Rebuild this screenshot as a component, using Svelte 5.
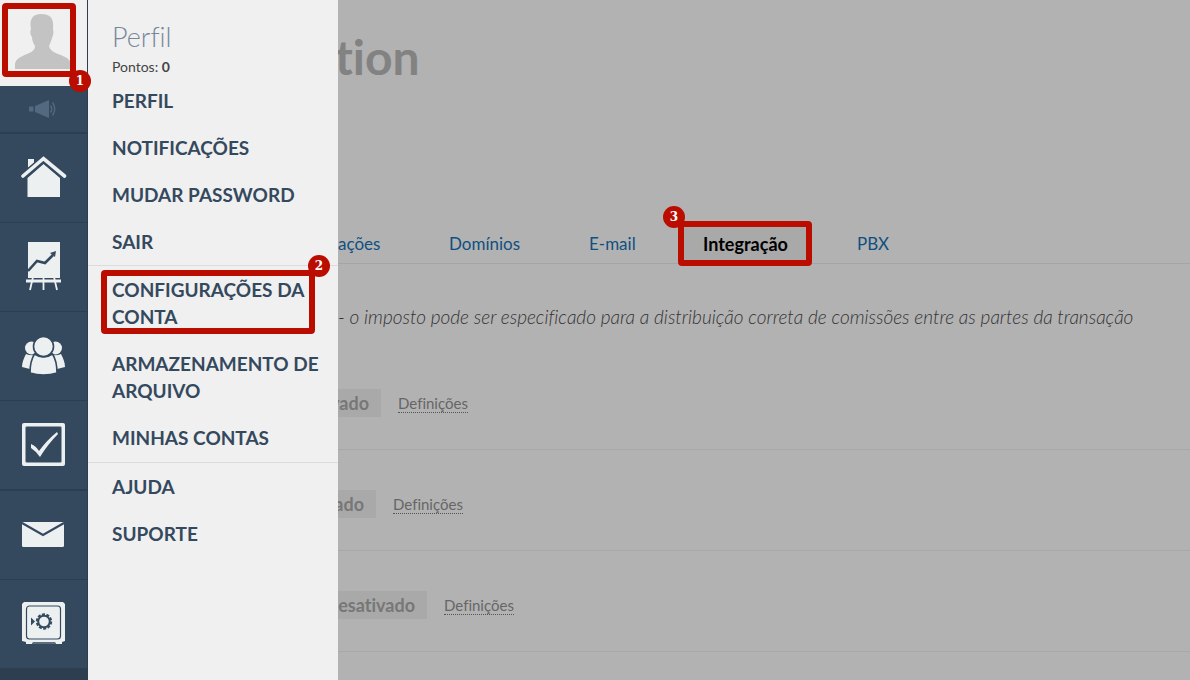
<script>
  const accountLinks = ['PERFIL', 'NOTIFICAÇÕES', 'MUDAR PASSWORD', 'SAIR'];
  const helpLinks = ['AJUDA', 'SUPORTE'];
  const tabs = ['ações', 'Domínios', 'E-mail', 'Integração', 'PBX'];
  const settings = [
    { state: 'vado', width: 43 },
    { state: 'ado', width: 38 },
    { state: 'esativado', width: 89 },
  ];
</script>

<div class="app">
  <nav class="rail" aria-label="Principal">
    <button class="avatar" aria-label="Perfil">
      <svg width="60" height="60" viewBox="0 0 60 60">
        <path fill="#c3c3c3" d="M2 59V55C2 49 7 47 14 44C19 42 22 40 22 36C20 33 19 30 19 27C17 25 17 21 18 19C16 9 20 4 28 4C38 4 41 9 40 19C41 22 40 26 39 28C38 31 37 34 36 36C37 40 40 42 45 44C53 47 58 49 58 55V59Z" />
      </svg>
      <span class="frame"><b class="mark below">1</b></span>
    </button>
    <button class="cell news" aria-label="Novidades">
      <svg width="28" height="20" viewBox="0 0 28 20" fill="#53697f">
        <path d="M0 7.500h4.500v5H0zM6 7 20 1v18L6 13z" />
        <path d="M21.500 6.500q2.500 3.500 0 7M23.500 3.500q4.500 6.500 0 13" fill="none" stroke="#53697f" stroke-width="1.400" />
      </svg>
    </button>
    <button class="cell thick" aria-label="Início">
      <svg width="46" height="44" viewBox="0 0 46 44" fill="#ecf0f1">
        <path d="M7 12V3h6v4zM6.500 22 22.500 8 39 22v19H6.500z" />
        <path d="M2 20.500 22.500 3 43.500 20.500" fill="none" stroke="#34495e" stroke-width="7" />
        <path d="M2 20 22.500 2.500 43.500 20" fill="none" stroke="#ecf0f1" stroke-width="3.600" stroke-linecap="round" />
      </svg>
    </button>
    <button class="cell" aria-label="Relatórios">
      <svg width="36" height="50" viewBox="0 0 36 50">
        <path d="M2 0h32v36H2zM0 37.500h35v3H0z" fill="#ecf0f1" />
        <path d="M7 35 4 48M17.500 35v13M28 35l3 13" stroke="#ecf0f1" stroke-width="1.800" />
        <path d="m2 29 9-10 8 2 8-8" fill="none" stroke="#34495e" stroke-width="2.600" />
        <path d="m24 11 6-2-1 6z" fill="#34495e" />
      </svg>
    </button>
    <button class="cell" aria-label="Clientes">
      <svg width="44" height="40" viewBox="0 0 44 40" fill="#ecf0f1">
        <circle cx="9.500" cy="12" r="6.500" /><circle cx="33.500" cy="12" r="6.500" />
        <path d="M4 18C2 22 0 26 0 31q4 1 8 2L14 19Q8 20 4 18zM39 18c2 4 4 8 4 13q-4 1-8 2L29 19q6 1 10-1z" />
        <g stroke="#34495e" stroke-width="1.600">
          <path d="M12.500 18Q8 25 8 37q13.500 4 27 0Q35 25 30.500 18 21.500 24 12.500 18z" />
          <circle cx="21.500" cy="10.500" r="10" />
        </g>
      </svg>
    </button>
    <button class="cell" aria-label="Tarefas">
      <svg width="44" height="44" viewBox="0 0 44 44">
        <rect width="43" height="43" rx="2" fill="#ecf0f1" />
        <rect x="3.500" y="3.500" width="36" height="36" rx="1.500" fill="#34495e" stroke="#8f9eaa" />
        <path d="M9 21q5 2 8 7Q25 17 35 9l1 2Q26 21 18 34q-3-5-9-9z" fill="#ecf0f1" />
      </svg>
    </button>
    <button class="cell thick" aria-label="Correio">
      <svg width="44" height="28" viewBox="0 0 44 28">
        <rect y="1" width="42" height="25" rx="1.500" fill="#ecf0f1" />
        <path d="m0 2 21 12L42 2" fill="none" stroke="#34495e" stroke-width="2.200" />
      </svg>
    </button>
    <button class="cell" aria-label="Cofre">
      <svg width="44" height="44" viewBox="0 0 44 44">
        <path d="M2 0h39l2 2v37l-3 1v2h-6l-1-2H11l-1 2H4v-2l-4-1V2z" fill="#ecf0f1" />
        <rect x="4.500" y="4" width="34" height="33" rx="3" fill="none" stroke="#34495e" stroke-width="1.200" />
        <path d="M11 41h22" stroke="#8394a4" />
        <circle cx="22" cy="19.500" r="5.800" fill="none" stroke="#34495e" stroke-width="2" />
        <circle cx="22" cy="19.500" r="7.200" fill="none" stroke="#34495e" stroke-width="2" stroke-dasharray="3.020 1.500" />
        <path d="m9 15.500 4 4-4 4z" fill="#34495e" />
      </svg>
    </button>
  </nav>

  <aside class="drawer">
    <header>
      <h2>Perfil</h2>
      <p>Pontos: <b>0</b></p>
    </header>
    <ul>
      {#each accountLinks as item}
        <li><a href="#menu">{item}</a></li>
      {/each}
    </ul>
    <ul>
      <li class="marked">
        <a href="#menu">CONFIGURAÇÕES DA CONTA</a>
        <span class="frame"><b class="mark above">2</b></span>
      </li>
      <li><a href="#menu">ARMAZENAMENTO DE ARQUIVO</a></li>
      <li><a href="#menu">MINHAS CONTAS</a></li>
    </ul>
    <ul>
      {#each helpLinks as item}
        <li><a href="#menu">{item}</a></li>
      {/each}
    </ul>
  </aside>

  <main>
    <h1>tion</h1>
    <nav class="tabs" aria-label="Definições">
      {#each tabs as tab}
        {#if tab === 'Integração'}
          <a class="active" href="#tab" aria-current="page">{tab}<span class="frame"><b class="mark left">3</b></span></a>
        {:else}
          <a href="#tab">{tab}</a>
        {/if}
      {/each}
    </nav>
    <p class="note">- o imposto pode ser especificado para a distribuição correta de comissões entre as partes da transação</p>
    {#each settings as { state, width }}
      <section class="row">
        <span class="state" style:width="{width}px">{state}</span>
        <a href="#settings">Definições</a>
      </section>
    {/each}
  </main>
</div>

<style>
  :global(body) { margin: 0; }
  * { box-sizing: border-box; }
  .app {
    display: grid;
    grid-template-columns: 88px 250px minmax(0, 1fr);
    min-height: 100vh;
    background: #b2b2b2;
    font-family: Lato, "Open Sans", sans-serif;
    font-variant-ligatures: none;
  }
  a { color: inherit; text-decoration: none; }
  h1, h2, p, ul { margin: 0; padding: 0; }
  ul { list-style: none; }
  button { border: 0; padding: 0; font: inherit; display: grid; place-items: center; width: 100%; cursor: pointer; }

  .rail { background: #2c3e50; border-right: 1px solid #2c3e50; z-index: 1; }
  .avatar { position: relative; height: 86px; padding: 10px 3px 16px 13px; background: #f0f0f0; place-items: start; }
  .cell { height: 89px; background: #34495e; border-top: 1px solid #2c3e50; }
  .cell.thick { height: 90px; border-top-width: 2px; }
  .cell.news { height: 46px; padding-right: 2px; border: 0; }
  svg { display: block; }

  .frame { position: absolute; border: 6px solid #bb0c00; border-radius: 4px; pointer-events: none; }
  .avatar .frame { inset: 3px 11px 9px 2px; }
  .mark {
    position: absolute;
    display: grid;
    place-items: center;
    width: 22px;
    height: 22px;
    border-radius: 50%;
    background: #bb0c00;
    color: #fff;
    font: bold 12px/22px "DejaVu Serif", serif;
  }
  .below { right: -21px; bottom: -21px; }
  .above { right: -21px; top: -21px; }
  .left { left: -21px; top: -21px; }

  .drawer { background: #f0f0f0; color: #34495e; }
  header { padding: 21px 24px 0; height: 77px; }
  h2 { font-weight: 300; font-size: 27px; line-height: 32px; color: #77879a; }
  header p { margin-top: 4px; font-size: 14px; line-height: 20px; color: #444; }
  ul + ul { border-top: 1px solid #dcdcdc; }
  ul:last-child { margin-top: 1px; }
  li { position: relative; padding: 10px 16px 10px 24px; font-size: 19px; font-weight: 700; line-height: 27px; }
  .marked .frame { inset: 4px 23px 6px 13px; }

  main { overflow: hidden; color: #666; }
  h1 { margin-left: -3px; padding-top: 28px; height: 224px; font-size: 48px; line-height: 58px; color: #828282; }
  .tabs {
    display: grid;
    grid-template-columns: 111px 140px 90px 178px auto;
    justify-content: start;
    height: 40px;
    border-bottom: 1px solid #a5a5a5;
    font-size: 17px;
    line-height: 40px;
    color: #104f80;
  }
  .active { position: relative; margin-right: 47px; padding-left: 24px; background: #a9a9a9; font-size: 18px; font-weight: 700; color: #000; }
  .active .frame { inset: -3px -2px -2px -1px; }
  .note {
    padding-top: 40px;
    height: 85px;
    font-size: 19px;
    font-style: italic;
    font-weight: 300;
    line-height: 26px;
    white-space: nowrap;
    color: #333;
  }
  .row { display: flex; align-items: center; height: 101px; padding-top: 8px; border-bottom: 1px solid #a8a8a8; }
  .state {
    display: flex;
    flex: none;
    justify-content: flex-end;
    padding-right: 12px;
    background: #a9a9a9;
    font-size: 18px;
    font-weight: 700;
    line-height: 28px;
    color: #777;
  }
  .row a { margin-left: 17px; border-bottom: 1px dotted #555; font-size: 15px; line-height: 18px; }
</style>
